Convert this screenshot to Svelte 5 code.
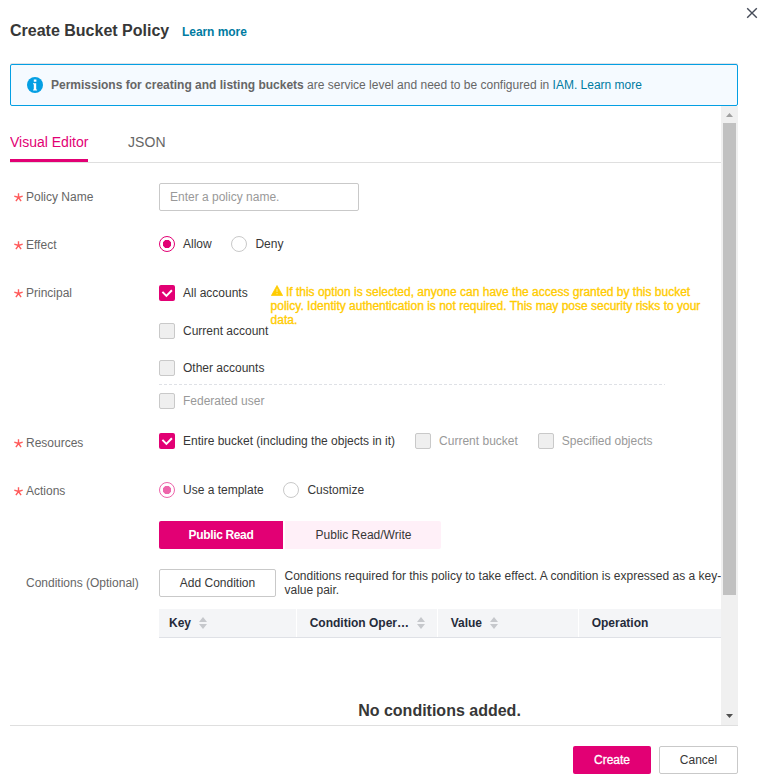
<script>
  let effect = $state('Allow');
  let template = $state('Public Read');
  const columns = [
    { name: 'Key', sortable: true, width: 138 },
    { name: 'Condition Oper…', sortable: true, width: 141 },
    { name: 'Value', sortable: true, width: 141 },
    { name: 'Operation', sortable: false, width: 142 }
  ];
</script>

{#snippet check(label, checked, muted)}
  <span class="option" class:muted>
    <span class="box" class:checked>
      {#if checked}
        <svg width="16" height="16" viewBox="0 0 16 16"><path d="M3.4 6.9 7.4 10.9l5.5-5.6" fill="none" stroke="#fff" stroke-width="2" /></svg>
      {/if}
    </span>
    <span class="text">{label}</span>
  </span>
{/snippet}

{#snippet radio(label, checked, soft)}
  <span class="option">
    <span class="radio" class:on={checked} class:soft></span>
    <span class="text">{label}</span>
  </span>
{/snippet}

{#snippet label(text)}
  <div class="label">
    <svg class="star" width="9" height="9" viewBox="0 0 9 9"><path d="M4.5 4.5V.2M4.5 4.5.3 3.2M4.5 4.5l4.2-1.3M4.5 4.5 1.9 8.2M4.5 4.5l2.6 3.7" fill="none" stroke="#ff5c5c" stroke-width="1.4" /></svg>
    <span>{text}</span>
  </div>
{/snippet}

<div class="dialog">
  <header>
    <h1>Create Bucket Policy</h1>
    <a class="learn">Learn more</a>
    <svg class="close" width="12" height="12" viewBox="0 0 12 12"><path d="m1.2 1.2 9.6 9.6m0-9.6-9.6 9.6" fill="none" stroke="#464c59" stroke-width="1.4" /></svg>
  </header>

  <div class="alert">
    <svg width="16" height="16" viewBox="0 0 16 16"><circle cx="8" cy="8" r="8" fill="#049fe3" /><path d="M6.8 2.6h2.6v2.2H6.8zM6 6.2h3.2v6.2h.9v1H6.1v-1h.7V7.3H6z" fill="#fff" /></svg>
    <p><b>Permissions for creating and listing buckets</b>{' '}<span>are service level and need to be configured in <a>IAM.</a> <a>Learn more</a></span></p>
  </div>

  <div class="scroll">
    <div class="body">
      <nav>
        <span class="tab active">Visual Editor</span>
        <span class="tab json">JSON</span>
      </nav>

      <div class="row name">
        {@render label('Policy Name')}
        <input placeholder="Enter a policy name." />
      </div>
      <div class="row effect">
        {@render label('Effect')}
        <div class="options">
          {@render radio('Allow', effect === 'Allow', false)}
          {@render radio('Deny', effect === 'Deny', false)}
        </div>
      </div>
      <div class="row principal">
        {@render label('Principal')}
        <div class="accounts">
          <div class="all">
            {@render check('All accounts', true, false)}
            <p class="warning"><svg width="12" height="11" viewBox="0 0 12 11"><path d="M6 .5 11.6 10.6H.4z" fill="#fc0" stroke="#fc0" stroke-linejoin="round" stroke-width=".8" /><path d="M6 3.8v3.2M6 8v1.2" stroke="#fff" stroke-opacity=".6" stroke-width="1" /></svg>{' '}<span>If this option is selected, anyone can have the access granted by this bucket</span><br /><span>policy. Identity authentication is not required. This may pose security risks to your</span><br />data.</p>
          </div>
          {@render check('Current account', false, false)}
          {@render check('Other accounts', false, false)}
          <div class="divider"><svg width="506" height="1"><path d="M0 .5h506" stroke="#dfe1e6" stroke-dasharray="3 2" /></svg></div>
          {@render check('Federated user', false, true)}
        </div>
      </div>
      <div class="row resources">
        {@render label('Resources')}
        <div class="options">
          {@render check('Entire bucket (including the objects in it)', true, false)}
          {@render check('Current bucket', false, true)}
          {@render check('Specified objects', false, true)}
        </div>
      </div>
      <div class="row actions">
        {@render label('Actions')}
        <div class="options">
          {@render radio('Use a template', true, true)}
          {@render radio('Customize', false, false)}
        </div>
      </div>
      <div class="segments">
        <button class="seg first" class:selected={template === 'Public Read'}>Public Read</button>
        <button class="seg second" class:selected={template === 'Public Read/Write'}>Public Read/Write</button>
      </div>
      <div class="row conditions">
        <div class="label plain"><span>Conditions (Optional)</span></div>
        <button class="outline add">Add Condition</button>
        <p>Conditions required for this policy to take effect. A condition is expressed as a key-<br />value pair.</p>
      </div>
      <div class="table">
        {#each columns as col}
          <div class="th" style="width: {col.width}px">
            <span>{col.name}</span>
            {#if col.sortable}
              <svg width="8" height="12" viewBox="0 0 8 12"><path d="M4 0 8 5H0zM4 12 0 7h8z" fill="#c6c8cc" /></svg>
            {/if}
          </div>
        {/each}
      </div>
      <div class="empty">No conditions added.</div>
    </div>
    <div class="bar">
      <svg width="17" height="17" viewBox="0 0 17 17"><path d="M5 11h7L8.5 7z" fill="#a0a0a0" /></svg>
      <div class="thumb"></div>
      <svg class="down" width="17" height="17" viewBox="0 0 17 17"><path d="M5 6h7l-3.5 4z" fill="#505050" /></svg>
    </div>
  </div>

  <footer>
    <button class="create">Create</button>
    <button class="outline cancel">Cancel</button>
  </footer>
</div>

<style>
  :global(body) { background: #fff; }
  .dialog, .dialog * { box-sizing: border-box; }
  .dialog { width: 758px; height: 779px; overflow: hidden; display: flex; flex-direction: column; font: 12px/14px "Liberation Sans", Arial, sans-serif; color: #373737; }
  p, h1 { margin: 0; }
  a { color: #007ba1; }
  button, input { font: inherit; margin: 0; padding: 0; }
  header { height: 63px; display: flex; padding-left: 10px; }
  h1 { width: 172px; font-size: 16px; line-height: 20px; margin-top: 21px; white-space: nowrap; }
  .learn { font-weight: bold; margin-top: 25px; letter-spacing: -.06px; }
  .close { margin: 7px 0 0 auto; }
  .dialog .alert { box-sizing: content-box; }
  .alert { border: 1px solid #049fe3; border-radius: 2px; background: #f5faff; width: 726px; height: 40px; margin: 1px 0 0 10px; display: flex; align-items: center; box-shadow: 0 -1px 0 #dfe1e6; color: #666; flex: none; }
  .alert svg { margin: 0 8px 0 16px; }
  .alert p { white-space: nowrap; }
  .scroll { height: 620px; width: 728px; margin-left: 10px; border-bottom: 1px solid #dfdfdf; display: flex; overflow: hidden; flex: none; }
  .body { width: 711px; overflow: hidden; }
  nav { height: 57px; border-bottom: 1px solid #dfdfdf; display: flex; }
  .tab { font-size: 14px; line-height: 20px; padding-top: 26px; margin-right: 40px; width: 78px; height: 56px; color: #666; white-space: nowrap; }
  .active { color: #e20074; border-bottom: 3px solid #e20074; }
  .json { letter-spacing: .1px; }
  .row { display: flex; }
  .label { width: 149px; padding-left: 4px; display: flex; color: #666; flex: none; }
  .label.plain { padding-left: 16px; white-space: nowrap; }
  .star { margin: 3px 3px 0 0; flex: none; }
  .name { margin-top: 20px; height: 53px; }
  .name .label { padding-top: 7px; }
  input { width: 200px; height: 28px; border: 1px solid #c9c9c9; border-radius: 2px; padding-left: 10px; outline: 0; }
  input::placeholder { color: #999; opacity: 1; }
  .effect { height: 49px; }
  .effect .label { padding-top: 2px; }
  .options { display: flex; }
  .option { display: flex; height: 16px; align-items: center; white-space: nowrap; }
  .options .option { margin-right: 20px; }
  .text { margin-left: 8px; line-height: 16px; }
  .muted { color: #999; }
  .box { width: 16px; height: 16px; border: 1px solid #c9c9c9; border-radius: 2px; background: #efefef; display: flex; flex: none; }
  .box.checked { border: 0; background: #e20074; }
  .radio { width: 16px; height: 16px; border: 1px solid #c9c9c9; border-radius: 50%; display: flex; flex: none; }
  .effect .option:last-child, .actions .option:last-child { margin-left: -.9px; }
  .effect .option:last-child .text, .actions .option:last-child .text { margin-left: 8.6px; }
  .radio.on { border-color: #e20074; background: radial-gradient(circle at center, #e20074 3.8px, #fff 4.5px); }
  .radio.soft { opacity: .6; }
  .principal { height: 148px; }
  .principal .label { padding-top: 1px; }
  .all { display: flex; height: 38px; }
  .all .option { width: 111.6px; }
  .warning { color: #fc0; -webkit-text-stroke: .35px #fc0; white-space: nowrap; height: 42px; }
  .warning svg { vertical-align: 0; margin-bottom: -1px; position: relative; top: -1px; }
  .accounts > .option:nth-child(2) { margin-bottom: 21px; }
  .divider { height: 1px; margin: 8px 0; display: flex; }
  .resources { height: 49px; }
  .resources .label { padding-top: 3px; }
  .actions { height: 39px; }
  .actions .label { padding-top: 2px; }
  .segments { padding-left: 149px; display: flex; height: 28px; }
  .seg { border: 0; background: #fff0f8; color: #373737; }
  .first { width: 124px; border-radius: 2px 0 0 2px; margin-right: 2px; }
  .second { width: 156px; border-radius: 0 2px 2px 0; padding-left: 1px; }
  .selected { background: #e20074; color: #fff; font-weight: bold; letter-spacing: -.35px; }
  .conditions { margin-top: 20px; height: 40px; }
  .conditions .label { padding-top: 7px; }
  .conditions p { margin-left: 8.5px; white-space: nowrap; }
  .outline { border: 1px solid #c9c9c9; border-radius: 2px; background: #fff; color: #373737; height: 28px; }
  .add { width: 117px; flex: none; }
  .table { margin-left: 149px; width: 562px; height: 29px; background: #f4f5f7; border-bottom: 1px solid #dfe1e6; display: flex; font-weight: bold; color: #252b3a; }
  .th { display: flex; align-items: center; padding-left: 12.7px; border-right: 1px solid #fff; white-space: nowrap; flex: none; }
  .th:first-child { padding-left: 10px; }
  .th:last-child { border: 0; }
  .th svg { margin-left: 8px; }
  .empty { margin: 63px 0 0 149px; width: 561px; text-align: center; font-size: 16px; line-height: 20px; font-weight: bold; }
  .bar { width: 17px; height: 619px; background: #f0f0f0; display: flex; flex-direction: column; }
  .bar svg { flex: none; }
  .thumb { width: 13px; height: 472px; margin-left: 2px; background: #c1c1c1; }
  .down { margin-top: auto; }
  footer { display: flex; gap: 8px; padding: 20px 20px 0 0; justify-content: flex-end; }
  .create { width: 78px; height: 28px; border: 0; border-radius: 2px; background: #e20074; color: #fff; -webkit-text-stroke: .3px #fff; }
  .cancel { width: 79px; }
</style>
